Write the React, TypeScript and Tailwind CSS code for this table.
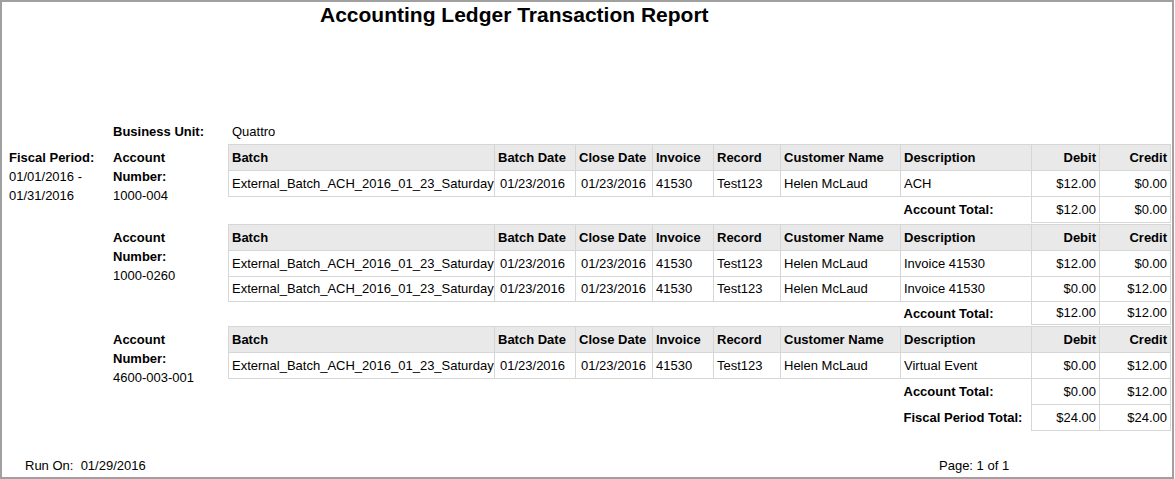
const cols = [266, 81, 77, 61, 67, 120, 131, 68, 71];
const heads = ["Batch", "Batch Date", "Close Date", "Invoice", "Record", "Customer Name", "Description", "Debit", "Credit"];

type Row = { invoice: string; desc: string; debit: string; credit: string; h?: string };

type Block = {
  account: string;
  rows: Row[];
  total: [string, string];
  totalH?: string;
  fiscal?: [string, string];
};

const blocks: Block[] = [
  {
    account: "1000-004",
    rows: [{ invoice: "41530", desc: "ACH", debit: "$12.00", credit: "$0.00" }],
    total: ["$12.00", "$0.00"],
  },
  {
    account: "1000-0260",
    rows: [
      { invoice: "41530", desc: "Invoice 41530", debit: "$12.00", credit: "$0.00" },
      { invoice: "41530", desc: "Invoice 41530", debit: "$0.00", credit: "$12.00", h: "h-[25px]" },
    ],
    total: ["$12.00", "$12.00"],
    totalH: "h-[23px]",
  },
  {
    account: "4600-003-001",
    rows: [{ invoice: "41530", desc: "Virtual Event", debit: "$0.00", credit: "$12.00" }],
    total: ["$0.00", "$12.00"],
    fiscal: ["$24.00", "$24.00"],
  },
];

const cell = "border border-[#d6d6d6] px-[3px] whitespace-nowrap";

function TotalRow({ label, values, h }: { label: string; values: [string, string]; h?: string }) {
  return (
    <tr className={h ?? "h-[26px]"}>
      <td colSpan={6}></td>
      <td className="px-[3px] font-bold whitespace-nowrap">{label}</td>
      <td className={cell + " text-right"}>{values[0]}</td>
      <td className={cell + " text-right"}>{values[1]}</td>
    </tr>
  );
}

function AccountBlock({ block }: { block: Block }) {
  return (
    <div className="flex">
      <div className="w-[115px] shrink-0 pt-[4px] leading-[19px]">
        <div className="font-bold">Account</div>
        <div className="font-bold">Number:</div>
        <div>{block.account}</div>
      </div>
      <table className="w-[942px] table-fixed border-collapse">
        <colgroup>
          {cols.map((w, i) => (
            <col key={i} style={{ width: w }} />
          ))}
        </colgroup>
        <thead>
          <tr className="h-[26px] bg-[#e9e9e9]">
            {heads.map((h, i) => (
              <th key={h} className={cell + " font-bold " + (i >= 7 ? "text-right" : "text-left")}>
                {h}
              </th>
            ))}
          </tr>
        </thead>
        <tbody>
          {block.rows.map((r, i) => (
            <tr key={i} className={r.h ?? "h-[26px]"}>
              <td className={cell}>External_Batch_ACH_2016_01_23_Saturday</td>
              <td className={cell + " pl-[5px]"}>01/23/2016</td>
              <td className={cell + " pl-[5px]"}>01/23/2016</td>
              <td className={cell}>{r.invoice}</td>
              <td className={cell}>Test123</td>
              <td className={cell}>Helen McLaud</td>
              <td className={cell}>{r.desc}</td>
              <td className={cell + " text-right"}>{r.debit}</td>
              <td className={cell + " text-right"}>{r.credit}</td>
            </tr>
          ))}
          <TotalRow label="Account Total:" values={block.total} h={block.totalH} />
          {block.fiscal && <TotalRow label="Fiscal Period Total:" values={block.fiscal} />}
        </tbody>
      </table>
    </div>
  );
}

export default function App() {
  return (
    <div className="w-[1174px] h-[479px] border-2 border-[#a0a0a0] bg-white text-black text-[13px] flex flex-col font-['Liberation_Sans',Arial,sans-serif]">
      {/* Title */}
      <div className="pl-[318px] pt-[1px] text-[21px] leading-[24px] font-bold">
        Accounting Ledger Transaction Report
      </div>

      {/* Business unit */}
      <div className="mt-[95px] flex pl-[111px] leading-[19px]">
        <div className="w-[115px] font-bold">Business Unit:</div>
        <div className="pl-[4px]">Quattro</div>
      </div>

      {/* Body */}
      <div className="mt-[3px] flex">
        <div className="w-[111px] shrink-0 pl-[7px] pt-[4px] leading-[19px]">
          <div className="font-bold">Fiscal Period:</div>
          <div>01/01/2016 -</div>
          <div>01/31/2016</div>
        </div>
        <div className="flex flex-col gap-[1px]">
          {blocks.map((b) => (
            <AccountBlock key={b.account} block={b} />
          ))}
        </div>
      </div>

      {/* Footer */}
      <div className="mt-auto flex pl-[23px] pb-[2px] leading-[19px]">
        <div className="w-[914px] whitespace-pre">Run On:  01/29/2016</div>
        <div>Page: 1 of 1</div>
      </div>
    </div>
  );
}
